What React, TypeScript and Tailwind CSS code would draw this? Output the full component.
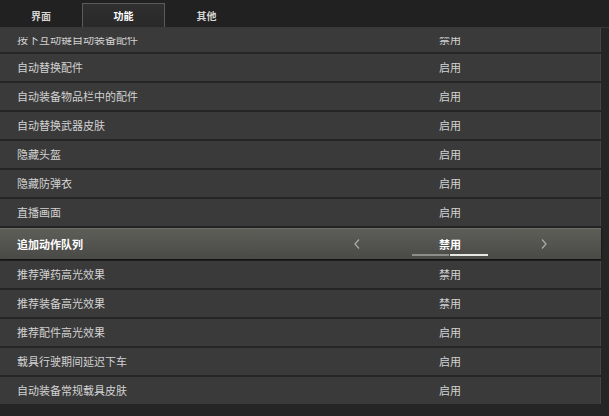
import React from "react";

const rows = [
    { label: "自动替换配件", value: "启用" },
    { label: "自动装备物品栏中的配件", value: "启用" },
    { label: "自动替换武器皮肤", value: "启用" },
    { label: "隐藏头盔", value: "启用" },
    { label: "隐藏防弹衣", value: "启用" },
    { label: "直播画面", value: "启用" },
    { label: "追加动作队列", value: "禁用", active: true },
    { label: "推荐弹药高光效果", value: "禁用" },
    { label: "推荐装备高光效果", value: "禁用" },
    { label: "推荐配件高光效果", value: "启用" },
    { label: "载具行驶期间延迟下车", value: "启用" },
    { label: "自动装备常规载具皮肤", value: "启用" },
];

const font = { fontFamily: '"Noto Sans CJK SC", "Noto Sans", sans-serif' };

const Chevron = ({ dir }: { dir: "left" | "right" }) => (
    <svg width="8" height="12" viewBox="0 0 8 12" fill="none">
        <path
            d={dir === "left" ? "M6 1.5 L2 6 L6 10.5" : "M2 1.5 L6 6 L2 10.5"}
            stroke="#a9a9a6"
            strokeWidth="1.3"
        />
    </svg>
);

const Row = ({ label, value, active }: { label: string; value: string; active?: boolean }) => (
    <div
        className={
            active
                ? "flex h-[31px] w-[601px] items-center bg-gradient-to-b from-[#5e5e59] to-[#494946] border-t border-[#6c6c67] shadow-[0_1px_2px_rgba(0,0,0,0.6)]"
                : "flex h-[27px] w-[601px] items-center bg-[#3a3a3a] border-r border-[#464646]"
        }
    >
        <div
            className={
                active
                    ? "w-[350px] pl-[17px] text-[11px] font-bold text-white"
                    : "w-[350px] pl-[17px] text-[11px] text-[#d2d2d2]"
            }
        >
            {label}
        </div>
        <div className="flex w-[14px] justify-center">{active && <Chevron dir="left" />}</div>
        <div className="w-[46px]" />
        <div className="relative flex h-full w-[80px] items-center justify-center">
            <span className={active ? "text-[11px] font-bold text-white" : "text-[11px] text-[#d2d2d2]"}>
                {value}
            </span>
            {active && (
                <div className="absolute bottom-[3px] left-[2px] flex gap-[1px]">
                    <div className="h-[2px] w-[37px] bg-[#8d8d89]" />
                    <div className="h-[2px] w-[38px] bg-[#e6e6e2]" />
                </div>
            )}
        </div>
        <div className="w-[47px]" />
        <div className="flex w-[14px] justify-center">{active && <Chevron dir="right" />}</div>
    </div>
);

export default function App() {
    return (
        <div className="flex h-[416px] w-[609px] flex-col overflow-hidden bg-[#252525]" style={font}>
            <div className="flex h-[28px] shrink-0 items-end bg-[#212121] border-b border-[#393939]">
                <div className="flex h-[23px] w-[82px] items-center justify-center text-[10px] font-bold text-[#d4d4d4]">
                    界面
                </div>
                <div className="flex h-[24px] w-[83px] items-center justify-center border-x border-t border-[#5b5b5b] bg-gradient-to-b from-[#2f2f2f] to-[#292929] text-[10px] font-bold text-white">
                    功能
                </div>
                <div className="flex h-[23px] w-[83px] items-center justify-center text-[10px] font-bold text-[#d4d4d4]">
                    其他
                </div>
            </div>
            <div className="flex flex-col gap-[2px] overflow-hidden">
                <div className="flex h-[24px] w-[601px] items-end bg-[#3a3a3a] pb-[7px] border-r border-[#464646]">
                    <div className="flex h-[8px] w-[350px] flex-col justify-end overflow-hidden pl-[17px]">
                        <span className="text-[11px] leading-[12px] text-[#d2d2d2]">按下互动键自动装备配件</span>
                    </div>
                    <div className="w-[60px]" />
                    <div className="flex h-[8px] w-[80px] flex-col items-center justify-end overflow-hidden">
                        <span className="text-[11px] leading-[12px] text-[#d2d2d2]">禁用</span>
                    </div>
                </div>
                {rows.map((r) => (
                    <Row key={r.label} {...r} />
                ))}
            </div>
        </div>
    );
}
